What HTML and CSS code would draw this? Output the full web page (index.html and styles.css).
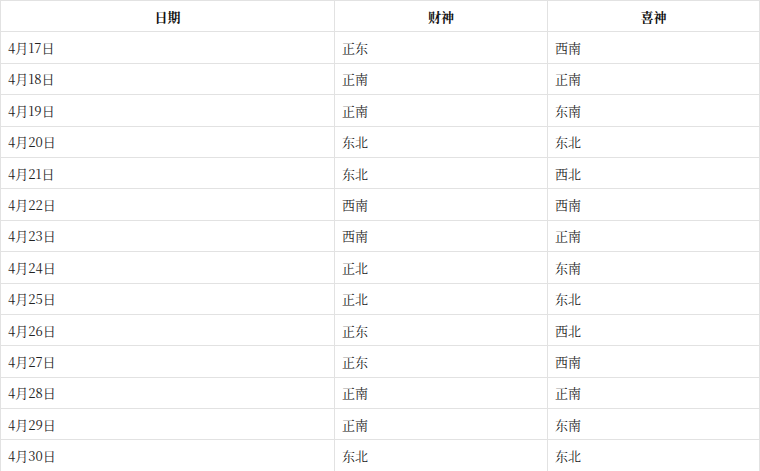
FILE: index.html
```
<!DOCTYPE html>
<html lang="zh-CN">
<head>
<meta charset="utf-8">
<link rel="stylesheet" href="styles.css">
</head>
<body>
<table class="tbl">
<colgroup><col class="c1"><col class="c2"><col class="c3"></colgroup>
<thead>
<tr><th>日期</th><th>财神</th><th>喜神</th></tr>
</thead>
<tbody>
<tr><td>4月17日</td><td>正东</td><td>西南</td></tr>
<tr><td>4月18日</td><td>正南</td><td>正南</td></tr>
<tr><td>4月19日</td><td>正南</td><td>东南</td></tr>
<tr><td>4月20日</td><td>东北</td><td>东北</td></tr>
<tr><td>4月21日</td><td>东北</td><td>西北</td></tr>
<tr><td>4月22日</td><td>西南</td><td>西南</td></tr>
<tr><td>4月23日</td><td>西南</td><td>正南</td></tr>
<tr><td>4月24日</td><td>正北</td><td>东南</td></tr>
<tr><td>4月25日</td><td>正北</td><td>东北</td></tr>
<tr><td>4月26日</td><td>正东</td><td>西北</td></tr>
<tr><td>4月27日</td><td>正东</td><td>西南</td></tr>
<tr><td>4月28日</td><td>正南</td><td>正南</td></tr>
<tr><td>4月29日</td><td>正南</td><td>东南</td></tr>
<tr><td>4月30日</td><td>东北</td><td>东北</td></tr>
</tbody>
</table>
</body>
</html>
```
FILE: styles.css
```
html, body {
  margin: 0;
  padding: 0;
  background: #fff;
}
body {
  font-family: "Noto Serif CJK SC", "Noto Serif SC", "Source Han Serif SC", serif;
  font-size: 13px;
  color: #222;
}
.tbl {
  width: 759px;
  border-collapse: collapse;
  table-layout: fixed;
}
.c1 { width: 334px; }
.c2 { width: 213px; }
.c3 { width: 212px; }
.tbl th, .tbl td {
  border: 1px solid #e2e2e2;
  height: 31.4px;
  padding: 0 7px;
  box-sizing: border-box;
  text-align: left;
  vertical-align: middle;
}
.tbl th {
  text-align: center;
  font-weight: bold;
  color: #111;
}
```
